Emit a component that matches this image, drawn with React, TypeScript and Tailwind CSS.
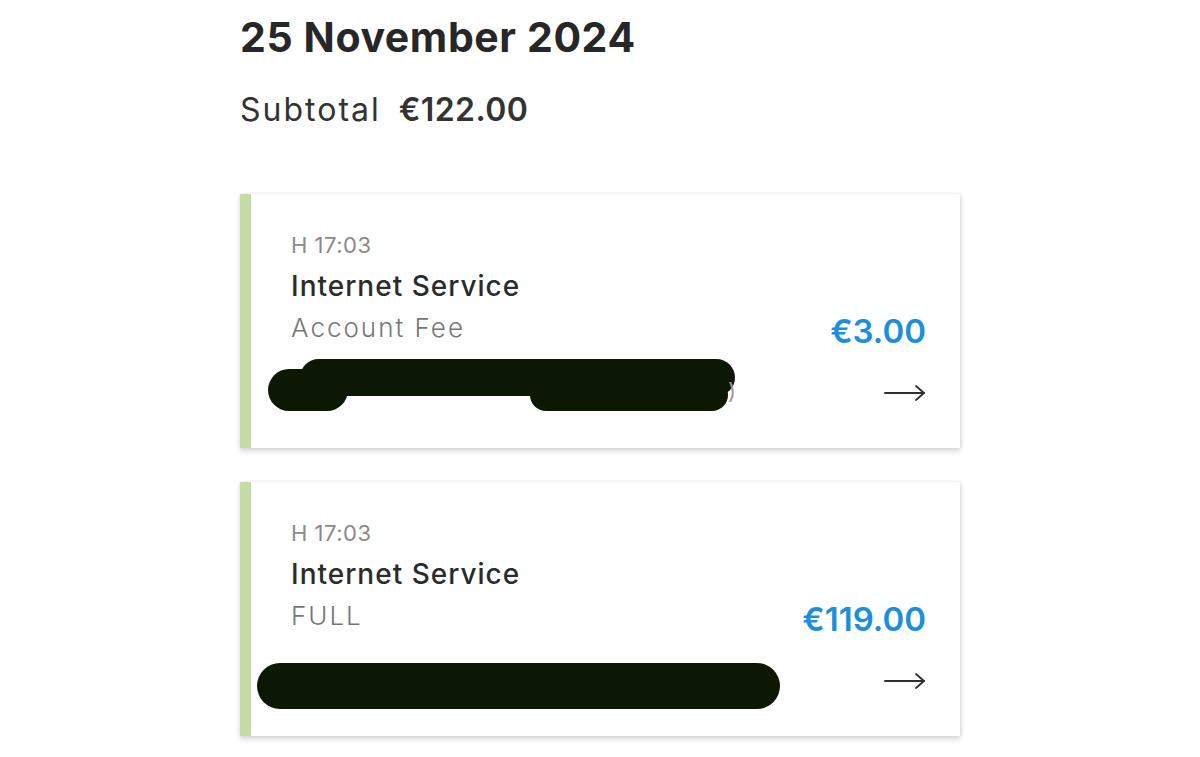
const items = [
	{ time: 'H 17:03', title: 'Internet Service', sub: 'Account Fee', amount: '€3.00', variant: 'a' },
	{ time: 'H 17:03', title: 'Internet Service', sub: 'FULL', amount: '€119.00', variant: 'b' },
];

function Arrow() {
	return (
		<svg width="42" height="18" viewBox="0 0 42 18" fill="none" stroke="#2f2f2f" strokeWidth="1.8" strokeLinecap="round" strokeLinejoin="round">
			<path d="M1 9h39" />
			<path d="M32 2l8 7-8 7" />
		</svg>
	);
}

// scribbled-out lines from the original screenshot
function Redaction({ variant }: { variant: string }) {
	if (variant === 'a') {
		return (
			<>
				<div className="absolute left-[49px] top-[165px] h-[37px] w-[435px] rounded-full bg-[#0c1804]" />
				<div className="absolute left-[17px] top-[175px] h-[42px] w-[80px] rounded-full bg-[#0c1804]" />
				<div className="absolute left-[279px] top-[185px] h-[32px] w-[198px] rounded-full bg-[#0c1804]" />
				<span className="absolute left-[477px] top-[184px] text-[22px] leading-[26px] text-[#9a9a9a]">)</span>
			</>
		);
	}
	return <div className="absolute left-[6px] top-[181px] h-[46px] w-[523px] rounded-full bg-[#0c1804]" />;
}

function Row({ item }: { item: (typeof items)[number] }) {
	return (
		<div className="relative flex h-[254px] flex-col border-l-[11px] border-[#c5dca6] bg-white pt-[31px] pr-[34px] pl-[40px] shadow-[0_3px_6px_rgba(0,0,0,0.16),1px_0_3px_rgba(0,0,0,0.08)]">
			<div className="flex items-end justify-between">
				<div className="flex flex-col">
					<span className="text-[22px] leading-[40px] tracking-[0.5px] text-[#8a8a8a]">{item.time}</span>
					<span className="text-[28px] leading-[42px] font-medium tracking-[1px] text-[#2b2b2b]">{item.title}</span>
					<span className="text-[26px] leading-[42px] font-light tracking-[2px] text-[#777]">{item.sub}</span>
				</div>
				<span className="mb-[-3px] text-[33px] leading-[42px] font-semibold text-[#1b8fdc]">{item.amount}</span>
			</div>
			<div className="mt-[23px] flex h-[42px] items-center justify-end">
				<Arrow />
			</div>
			<Redaction variant={item.variant} />
		</div>
	);
}

export default function App() {
	return (
		<div className="min-h-[757px] bg-white font-['Inter',sans-serif]">
			<div className="mx-auto w-[720px] pt-[12px]">
				<h1 className="text-[41px] leading-[50px] font-bold tracking-[0.6px] text-[#272727]">25 November 2024</h1>
				<p className="mt-[28px] flex items-baseline gap-[18px] text-[32px] leading-[40px] text-[#333]">
					<span className="tracking-[2px]">Subtotal</span>
					<span className="font-semibold tracking-[0.4px]">€122.00</span>
				</p>
				<div className="mt-[64px] flex flex-col gap-[34px]">
					{items.map((it, i) => (
						<Row key={i} item={it} />
					))}
				</div>
			</div>
		</div>
	);
}
